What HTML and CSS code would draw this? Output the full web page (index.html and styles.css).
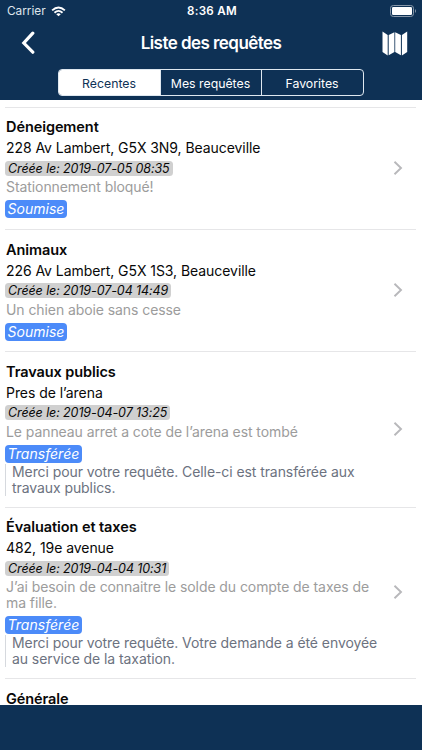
FILE: index.html
```html
<!DOCTYPE html>
<html lang="fr">
<head>
<meta charset="utf-8">
<title>Liste des requêtes</title>
<link rel="stylesheet" href="styles.css">
</head>
<body>
<div class="app">
  <header class="header">
    <div class="status">
      <div class="carrier"><span>Carrier</span>
        <svg width="15" height="11" viewBox="0 0 16 11" fill="none" stroke="#fff" stroke-width="2"><path d="M1.2 4.3Q8-2 14.8 4.3M3.7 6.8Q8 2.9 12.3 6.8"/><path d="M8 10.6L5.6 8.3Q8 6.3 10.4 8.3Z" fill="#fff" stroke="none"/></svg>
      </div>
      <span class="clock">8:36 AM</span>
      <svg class="battery" width="27" height="12" viewBox="0 0 27 12"><rect x=".5" y=".5" width="23" height="11" rx="2.8" fill="none" stroke="#8797a9"/><rect x="2" y="2" width="20" height="8" rx="1.2" fill="#fff"/><path d="M25 4Q27 6 25 8Z" fill="#8797a9"/></svg>
    </div>
    <div class="nav">
      <svg class="back" width="14" height="24" viewBox="0 0 14 24" fill="none" stroke="#fff" stroke-width="3.2" stroke-linecap="round" stroke-linejoin="miter"><path d="M11.8 2.2L2.8 12L11.8 21.2"/></svg>
      <h1 class="heading">Liste des requêtes</h1>
      <svg class="map" width="26" height="25" viewBox="0 0 26 26" preserveAspectRatio="none" fill="#fff"><path d="M.5.5L5.7 4.2V25.5L.5 21.8ZM6.7 4.2L12.4 1.2V21.8L6.7 25.2ZM13.2 1.2L18.9 4.2V25.2L13.2 21.8ZM19.9 4.2L25.2.5V21.8L19.9 25.5Z"/></svg>
    </div>
    <div class="tabs">
      <div class="tab active"><span>Récentes</span></div>
      <div class="tab"><span>Mes requêtes</span></div>
      <div class="tab"><span>Favorites</span></div>
    </div>
  </header>
  <main class="list">
    <article class="item">
      <div class="body">
        <h2 class="title"><span>Déneigement</span></h2>
        <p class="address"><span>228 Av Lambert, G5X 3N9, Beauceville</span></p>
        <span class="date">Créée le: 2019-07-05 08:35</span>
        <p class="desc"><span>Stationnement bloqué!</span></p>
        <span class="badge">Soumise</span>
      </div>
      <svg class="chevron" width="10" height="16" viewBox="0 0 10 16"><path d="M1.5 1.8L8 8L1.5 14.2"/></svg>
    </article>
    <article class="item">
      <div class="body">
        <h2 class="title"><span>Animaux</span></h2>
        <p class="address"><span>226 Av Lambert, G5X 1S3, Beauceville</span></p>
        <span class="date">Créée le: 2019-07-04 14:49</span>
        <p class="desc"><span>Un chien aboie sans cesse</span></p>
        <span class="badge">Soumise</span>
      </div>
      <svg class="chevron" width="10" height="16" viewBox="0 0 10 16"><path d="M1.5 1.8L8 8L1.5 14.2"/></svg>
    </article>
    <article class="item">
      <div class="body">
        <h2 class="title"><span>Travaux publics</span></h2>
        <p class="address"><span>Pres de l’arena</span></p>
        <span class="date">Créée le: 2019-04-07 13:25</span>
        <p class="desc"><span>Le panneau arret a cote de l’arena est tombé</span></p>
        <span class="badge">Transférée</span>
        <p class="note">Merci pour votre requête. Celle-ci est transférée aux<br>travaux publics.</p>
      </div>
      <svg class="chevron" width="10" height="16" viewBox="0 0 10 16"><path d="M1.5 1.8L8 8L1.5 14.2"/></svg>
    </article>
    <article class="item">
      <div class="body">
        <h2 class="title"><span>Évaluation et taxes</span></h2>
        <p class="address"><span>482, 19e avenue</span></p>
        <span class="date">Créée le: 2019-04-04 10:31</span>
        <p class="desc"><span>J’ai besoin de connaitre le solde du compte de taxes de<br>ma fille.</span></p>
        <span class="badge">Transférée</span>
        <p class="note">Merci pour votre requête. Votre demande a été envoyée<br>au service de la taxation.</p>
      </div>
      <svg class="chevron" width="10" height="16" viewBox="0 0 10 16"><path d="M1.5 1.8L8 8L1.5 14.2"/></svg>
    </article>
    <article class="item">
      <div class="body">
        <h2 class="title"><span>Générale</span></h2>
      </div>
    </article>
  </main>
  <footer class="footer"></footer>
</div>
</body>
</html>
```
FILE: styles.css
```css
* { box-sizing: border-box; margin: 0; padding: 0; }
body { font-family: Inter, "Liberation Sans", sans-serif; background: #fff; color: #080808; }
svg { display: block; flex: none; }
.app { height: 750px; display: flex; flex-direction: column; overflow: hidden; }
.header { flex: none; height: 100px; background: #0e3155; color: #fff; }
.status { height: 22px; padding: 0 5px 0 7px; display: grid; grid-template-columns: 1fr auto 1fr; align-items: center; font-size: 11.8px; }
.carrier { display: flex; align-items: center; gap: 5px; color: #dfe5ec; }
.clock { font-weight: 600; font-size: 11.6px; letter-spacing: .3px; }
.battery { justify-self: end; }
.nav { height: 42px; padding: 0 14px 0 21px; display: grid; grid-template-columns: 26px 1fr 33px; align-items: center; }
.heading { font-size: 17px; line-height: 20px; font-weight: 600; letter-spacing: -.55px; text-align: center; }
.map { justify-self: end; }
.tabs { width: 306px; height: 27px; margin: 5px 0 0 58px; display: grid; grid-template-columns: 101px 101px 1fr; border: 1px solid #dfe8f0; border-radius: 4px; overflow: hidden; }
.tab { display: flex; align-items: center; justify-content: center; padding: 1px 1px 0 0; font-size: 12.3px; letter-spacing: 0; }
.tab + .tab { border-left: 1px solid #dfe8f0; }
.tab.active { background: #fff; color: #0e3155; }
.list { flex: 1; min-height: 0; overflow: hidden; padding: 6.9px 6px 0 5px; }
.item { border-top: 1px solid #e6e6e8; padding: 9.5px 13px 10.9px 0; display: flex; align-items: center; }
.body { flex: 1; display: flex; flex-direction: column; align-items: flex-start; }
.title { font-size: 14.5px; line-height: 20px; font-weight: 600; letter-spacing: -.08px; padding-left: 1px; }
.address { font-size: 14px; line-height: 22px; letter-spacing: -.06px; padding-left: 1px; }
.date { margin-top: 1.5px; height: 15px; line-height: 15px; padding: 0 3px; border-radius: 3.5px; background: #d0d0d0; font-size: 12.5px; letter-spacing: -.1px; font-style: italic; }
.desc { margin-top: 3.4px; font-size: 14px; line-height: 16.2px; letter-spacing: -.08px; color: #9c9c9c; padding-left: 1px; white-space: nowrap; }
.badge { margin-top: 4.8px; height: 18px; line-height: 18px; padding: 0 2.5px; border-radius: 4px; background: #4c8bf9; color: #fff; font-size: 14px; letter-spacing: .02px; font-style: italic; }
.note { margin-top: 1px; padding-left: 6px; border-left: 1px solid #d6d9de; font-size: 14px; line-height: 16px; letter-spacing: -.08px; color: #6c7280; white-space: nowrap; }
.chevron { fill: none; stroke: #b8b8bb; stroke-width: 1.9; }
.footer { flex: none; height: 45px; background: #0e3155; }
```
